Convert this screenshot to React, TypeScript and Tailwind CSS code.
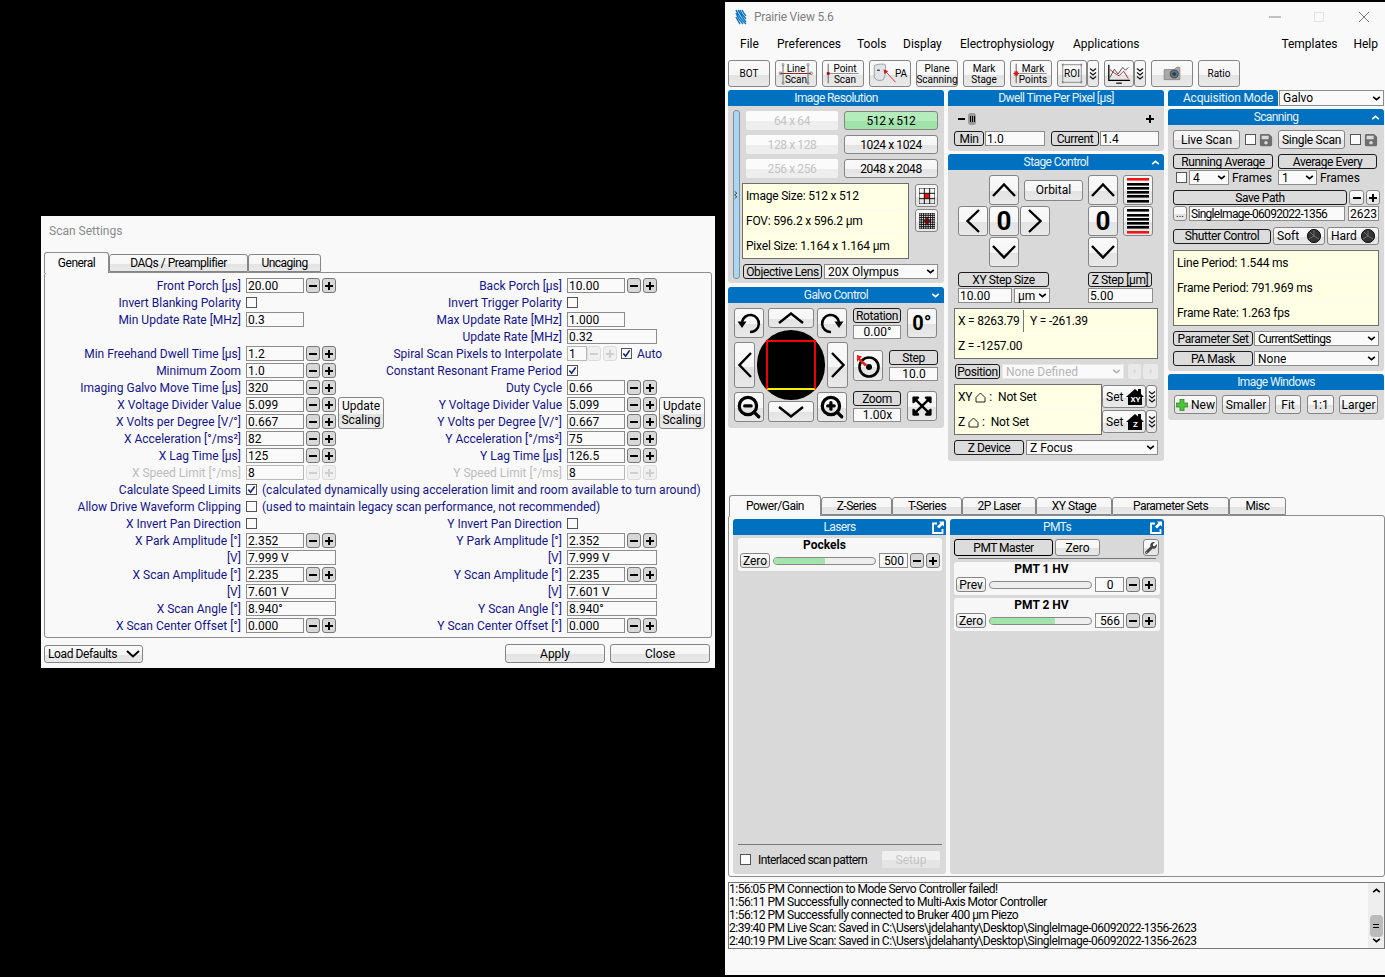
import type { ReactNode } from 'react';
import { FaExpandArrowsAlt, FaSave, FaWrench } from 'react-icons/fa';
import { ZoomIn, ZoomOut } from 'lucide-react';

const raised =
  'bg-[linear-gradient(#f9f9f9_0%,#f6f6f6_55%,#e3e3e3_55%,#e9e9e9_100%)] border border-[#858585] rounded-[3px]';
const navy = 'text-[#14148c]';

function Btn({ className = '', children }: { className?: string; children?: ReactNode }) {
  return <div className={`${raised} flex shrink-0 items-center justify-center whitespace-nowrap text-black ${className}`}>{children}</div>;
}

function Tag({ className = '', children }: { className?: string; children?: ReactNode }) {
  return (
    <div className={`flex shrink-0 items-center justify-center whitespace-nowrap rounded-[3px] border border-[#1c1c1c] bg-[#dcdcdc] tracking-[-0.4px] text-black ${className}`}>
      {children}
    </div>
  );
}

function Field({ className = '', children }: { className?: string; children?: ReactNode }) {
  return <div className={`flex shrink-0 items-center whitespace-nowrap border border-[#8c8c8c] bg-[#fafafa] pl-px text-black ${className}`}>{children}</div>;
}

function Caret({ className = '' }: { className?: string }) {
  return (
    <svg viewBox="0 0 10 6" className={`h-[5px] w-[9px] shrink-0 ${className}`}>
      <path d="M1 1l4 3.5L9 1" fill="none" stroke="currentColor" strokeWidth="2" />
    </svg>
  );
}

function Select({ className = '', muted = false, children }: { className?: string; muted?: boolean; children?: ReactNode }) {
  return (
    <div className={`flex shrink-0 items-center justify-between border bg-[#fafafa] pl-[3px] pr-[2px] ${muted ? 'border-[#e8e8e8] bg-[#eeeeee] text-[#b5b5b5]' : 'border-[#8c8c8c] text-black'} ${className}`}>
      <span className="truncate">{children}</span>
      <Caret />
    </div>
  );
}

function Step({ kind, off = false }: { kind: 'minus' | 'plus'; off?: boolean }) {
  return (
    <div className={`flex h-[15px] w-[14px] items-center justify-center rounded-[3px] border ${off ? 'border-[#dddddd] bg-[#f0f0f0] text-[#cfcfcf]' : 'border-[#777777] bg-[#d8d8d8] text-black'}`}>
      <svg viewBox="0 0 8 8" className="h-[8px] w-[8px]">
        <rect x="0" y="3" width="8" height="2" fill="currentColor" />
        {kind === 'plus' && <rect x="3" y="0" width="2" height="8" fill="currentColor" />}
      </svg>
    </div>
  );
}

function Stepper({ off = false, className = '' }: { off?: boolean; className?: string }) {
  return (
    <div className={`flex gap-[2px] ${className}`}>
      <Step kind="minus" off={off} />
      <Step kind="plus" off={off} />
    </div>
  );
}

function Check({ on = false, className = '' }: { on?: boolean; className?: string }) {
  return (
    <div className={`flex h-[11px] w-[11px] shrink-0 items-center justify-center border border-[#555555] bg-[#fafafa] ${className}`}>
      {on && (
        <svg viewBox="0 0 10 10" className="h-[9px] w-[9px]">
          <path d="M1.5 5l2.5 3L8.5 1.5" fill="none" stroke="#12207a" strokeWidth="1.8" />
        </svg>
      )}
    </div>
  );
}

function Chevron({ dir, w, h, stroke = 2.4 }: { dir: 'up' | 'down' | 'left' | 'right'; w: number; h: number; stroke?: number }) {
  const paths = {
    up: `M1 ${h - 1}L${w / 2} 1.5L${w - 1} ${h - 1}`,
    down: `M1 1L${w / 2} ${h - 1.5}L${w - 1} 1`,
    left: `M${w - 1} 1L1.5 ${h / 2}L${w - 1} ${h - 1}`,
    right: `M1 1L${w - 1.5} ${h / 2}L1 ${h - 1}`,
  };
  return (
    <svg width={w} height={h} viewBox={`0 0 ${w} ${h}`}>
      <path d={paths[dir]} fill="none" stroke="#000" strokeWidth={stroke} />
    </svg>
  );
}

function DoubleCaret() {
  return (
    <svg viewBox="0 0 8 14" className="h-[14px] w-[8px]">
      <path d="M1 1.5l3 2.5 3-2.5M1 5.5l3 2.5 3-2.5M1 9.5l3 2.5 3-2.5" fill="none" stroke="#111" strokeWidth="1.2" />
    </svg>
  );
}

function Panel({ title, corner, popout = false, className = '', bodyClass = '', children }: { title: string; corner?: 'up' | 'down'; popout?: boolean; className?: string; bodyClass?: string; children?: ReactNode }) {
  return (
    <div className={className}>
      <div className="relative h-[16px] rounded-t-[3px] bg-[#0070c0] text-center leading-[16px] tracking-[-0.6px] text-[#e8f3fb]">
        {title}
        {corner && (
          <svg viewBox="0 0 10 6" className="absolute right-[4px] top-[6px] h-[5px] w-[9px]">
            <path d={corner === 'up' ? 'M1 5l4-3.5L9 5' : 'M1 1l4 3.5L9 1'} fill="none" stroke="#fff" strokeWidth="2" />
          </svg>
        )}
        {popout && (
          <svg viewBox="0 0 12 13" className="absolute right-[2px] top-[2px] h-[13px] w-[12px]">
            <path d="M5 2.5H1v9.5h9.5V8" fill="none" stroke="#fff" strokeWidth="1.8" />
            <path d="M7 0.5h5v5l-1.6-1.5L7 7.5 5 5.5 8.5 2z" fill="#fff" />
          </svg>
        )}
      </div>
      <div className={`rounded-b-[3px] bg-[#d9d9d9] ${bodyClass}`}>{children}</div>
    </div>
  );
}

function Notes({ className = '', lines }: { className?: string; lines: ReactNode[] }) {
  return (
    <div className={`flex shrink-0 flex-col divide-y divide-[#fbfbf4] whitespace-nowrap border border-[#6f6f6f] bg-[#ffffe3] tracking-[-0.2px] text-black ${className}`}>
      {lines.map((line, i) => (
        <div key={i} className="flex flex-1 items-center pl-[3px]">
          {line}
        </div>
      ))}
    </div>
  );
}

function GridIcon({ cells, red }: { cells: number; red: number[] }) {
  const size = 18 / cells;
  const lines = Array.from({ length: cells + 1 }, (_, i) => i * size);
  return (
    <svg viewBox="0 0 18 18" className="h-[16px] w-[16px]">
      {red.map((c) => (
        <rect key={c} x={(c % cells) * size} y={Math.floor(c / cells) * size} width={size} height={size} fill="#f00a0a" />
      ))}
      {lines.map((p) => (
        <g key={p}>
          <path d={`M${p} 0V18`} stroke="#111" strokeWidth="1.1" />
          <path d={`M0 ${p}H18`} stroke="#111" strokeWidth="1.1" />
        </g>
      ))}
    </svg>
  );
}

function Rotate({ flip = false }: { flip?: boolean }) {
  return (
    <svg viewBox="0 0 24 24" className={`h-[24px] w-[24px] ${flip ? '-scale-x-100' : ''}`}>
      <path d="M13 21a8.5 8.5 0 1 0-8-10" fill="none" stroke="#000" strokeWidth="2.6" />
      <path d="M0.5 10.5l4.5 6.5 4.5-6.5z" fill="#000" />
    </svg>
  );
}

function Bars({ red }: { red: 'top' | 'bottom' }) {
  const ys = [2, 7, 11, 15, 19, 24];
  return (
    <svg viewBox="0 0 22 26" className="h-[26px] w-[22px]">
      {ys.map((y, i) => (
        <rect key={y} x="0" y={y - 1} width="22" height="2.6" fill={(red === 'top' && i === 0) || (red === 'bottom' && i === 5) ? '#f01414' : '#000'} />
      ))}
    </svg>
  );
}

function Shutter() {
  return (
    <svg viewBox="0 0 14 14" className="h-[14px] w-[14px]">
      <circle cx="7" cy="7" r="6.6" fill="#333" stroke="#111" />
      <path d="M7 1L7 7L2 10M7 7L12 10M3 3L7 7" stroke="#888" strokeWidth="0.7" fill="none" />
    </svg>
  );
}

function HomeOutline() {
  return (
    <svg viewBox="0 0 11 11" className="mx-[3px] h-[11px] w-[11px]">
      <path d="M1 5.5L5.5 1 10 5.5V10H1z" fill="none" stroke="#222" strokeWidth="1" />
    </svg>
  );
}

type Cell =
  | { kind: 'step'; label: string; value: string; off?: boolean; extra?: 'auto' }
  | { kind: 'plain'; label: string; value: string }
  | { kind: 'wide'; label: string; value: string }
  | { kind: 'check'; label: string; on?: boolean }
  | { kind: 'none' };

const settingRows: { left: Cell; right?: Cell; note?: string; on?: boolean; label?: string }[] = [
  { left: { kind: 'step', label: 'Front Porch [µs]', value: '20.00' }, right: { kind: 'step', label: 'Back Porch [µs]', value: '10.00' } },
  { left: { kind: 'check', label: 'Invert Blanking Polarity' }, right: { kind: 'check', label: 'Invert Trigger Polarity' } },
  { left: { kind: 'plain', label: 'Min Update Rate [MHz]', value: '0.3' }, right: { kind: 'plain', label: 'Max Update Rate [MHz]', value: '1.000' } },
  { left: { kind: 'none' }, right: { kind: 'wide', label: 'Update Rate [MHz]', value: '0.32' } },
  { left: { kind: 'step', label: 'Min Freehand Dwell Time [µs]', value: '1.2' }, right: { kind: 'step', label: 'Spiral Scan Pixels to Interpolate', value: '1', off: true, extra: 'auto' } },
  { left: { kind: 'step', label: 'Minimum Zoom', value: '1.0' }, right: { kind: 'check', label: 'Constant Resonant Frame Period', on: true } },
  { left: { kind: 'step', label: 'Imaging Galvo Move Time [µs]', value: '320' }, right: { kind: 'step', label: 'Duty Cycle', value: '0.66' } },
  { left: { kind: 'step', label: 'X Voltage Divider Value', value: '5.099' }, right: { kind: 'step', label: 'Y Voltage Divider Value', value: '5.099' } },
  { left: { kind: 'step', label: 'X Volts per Degree [V/°]', value: '0.667' }, right: { kind: 'step', label: 'Y Volts per Degree [V/°]', value: '0.667' } },
  { left: { kind: 'step', label: 'X Acceleration [°/ms²]', value: '82' }, right: { kind: 'step', label: 'Y Acceleration [°/ms²]', value: '75' } },
  { left: { kind: 'step', label: 'X Lag Time [µs]', value: '125' }, right: { kind: 'step', label: 'Y Lag Time [µs]', value: '126.5' } },
  { left: { kind: 'step', label: 'X Speed Limit [°/ms]', value: '8', off: true }, right: { kind: 'step', label: 'Y Speed Limit [°/ms]', value: '8', off: true } },
  { left: { kind: 'none' }, label: 'Calculate Speed Limits', on: true, note: '(calculated dynamically using acceleration limit and room available to turn around)' },
  { left: { kind: 'none' }, label: 'Allow Drive Waveform Clipping', note: '(used to maintain legacy scan performance, not recommended)' },
  { left: { kind: 'check', label: 'X Invert Pan Direction' }, right: { kind: 'check', label: 'Y Invert Pan Direction' } },
  { left: { kind: 'step', label: 'X Park Amplitude [°]', value: '2.352' }, right: { kind: 'step', label: 'Y Park Amplitude [°]', value: '2.352' } },
  { left: { kind: 'wide', label: '[V]', value: '7.999 V' }, right: { kind: 'wide', label: '[V]', value: '7.999 V' } },
  { left: { kind: 'step', label: 'X Scan Amplitude [°]', value: '2.235' }, right: { kind: 'step', label: 'Y Scan Amplitude [°]', value: '2.235' } },
  { left: { kind: 'wide', label: '[V]', value: '7.601 V' }, right: { kind: 'wide', label: '[V]', value: '7.601 V' } },
  { left: { kind: 'wide', label: 'X Scan Angle [°]', value: '8.940°' }, right: { kind: 'wide', label: 'Y Scan Angle [°]', value: '8.940°' } },
  { left: { kind: 'step', label: 'X Scan Center Offset [°]', value: '0.000' }, right: { kind: 'step', label: 'Y Scan Center Offset [°]', value: '0.000' } },
];

function SettingLabel({ text, off = false }: { text?: string; off?: boolean }) {
  return <div className={`h-[17px] whitespace-nowrap pr-[5px] text-right leading-[18px] ${off ? 'text-[#bcbcbc]' : navy}`}>{text}</div>;
}

function SettingControl({ cell }: { cell: Cell }) {
  if (cell.kind === 'none') return <div />;
  if (cell.kind === 'check') {
    return (
      <div className="flex h-[17px] items-center">
        <Check on={cell.on} />
      </div>
    );
  }
  const off = cell.kind === 'step' && cell.off;
  const auto = cell.kind === 'step' && cell.extra === 'auto';
  return (
    <div className="flex h-[17px] items-center whitespace-nowrap">
      <Field className={`h-[15px] ${cell.kind === 'wide' ? 'w-[90px]' : auto ? 'w-[20px]' : 'w-[58px]'} ${off ? 'border-[#b8b8b8] text-[#a0a0a0]' : ''}`}>{cell.value}</Field>
      {cell.kind === 'step' && <Stepper off={off} className={auto ? '' : 'ml-[2px]'} />}
      {auto && (
        <>
          <Check on className="ml-[4px]" />
          <span className={`ml-[5px] ${navy}`}>Auto</span>
        </>
      )}
    </div>
  );
}

function UpdateScaling() {
  return (
    <Btn className="row-span-2 h-[32px] w-[46px] flex-col self-center leading-[14px]">
      <span>Update</span>
      <span>Scaling</span>
    </Btn>
  );
}

function ScanSettings() {
  return (
    <div className="absolute left-[41px] top-[216px] flex h-[452px] w-[674px] flex-col bg-[#f9f9f9]">
      <div className="ml-[8px] mt-[8px] h-[14px] leading-[14px] text-[#8a8a8a]">Scan Settings</div>
      <div className="ml-[3px] mt-[12px] flex h-[22px] items-end tracking-[-0.5px]">
        <div className="relative z-10 -mb-px flex h-[21px] w-[65px] items-center justify-center rounded-t-[3px] border border-b-0 border-[#8c8c8c] bg-[#f9f9f9]">General</div>
        <div className={`${raised} flex h-[18px] w-[139px] items-center justify-center rounded-b-none`}>DAQs / Preamplifier</div>
        <div className={`${raised} flex h-[18px] w-[73px] items-center justify-center rounded-b-none`}>Uncaging</div>
      </div>
      <div className="mx-[3px] h-[366px] rounded-[3px] border border-[#8c8c8c] pt-[4px]">
        <div className="grid auto-rows-[17px] grid-cols-[201px_92px_46px_183px_92px_46px]">
          {settingRows.map((row, i) => {
            if (row.note) {
              return [
                <SettingLabel key={`${i}a`} text={row.label} />,
                <div key={`${i}b`} className={`col-span-5 flex h-[17px] items-center whitespace-nowrap ${navy}`}>
                  <Check on={row.on} />
                  <span className="ml-[5px]">{row.note}</span>
                </div>,
              ];
            }
            const left = row.left;
            const right = row.right as Cell;
            const leftLabel = left.kind === 'none' ? undefined : left.label;
            const rightLabel = right.kind === 'none' ? undefined : right.label;
            const leftOff = left.kind === 'step' && left.off;
            const rightOff = right.kind === 'step' && right.off && !right.extra;
            const hasUpdate = i === 7;
            const spansUpdate = i === 7 || i === 8;
            return [
              <SettingLabel key={`${i}a`} text={leftLabel} off={leftOff} />,
              <SettingControl key={`${i}b`} cell={left} />,
              hasUpdate ? <UpdateScaling key={`${i}c`} /> : spansUpdate ? null : <div key={`${i}c`} />,
              <SettingLabel key={`${i}d`} text={rightLabel} off={rightOff} />,
              <div key={`${i}e`} className={right.kind === 'step' && right.extra ? 'col-span-2' : ''}>
                <SettingControl cell={right} />
              </div>,
              hasUpdate ? <UpdateScaling key={`${i}f`} /> : spansUpdate || (right.kind === 'step' && right.extra) ? null : <div key={`${i}f`} />,
            ];
          })}
        </div>
      </div>
      <div className="mx-[3px] mt-[6px] flex items-center">
        <div className={`${raised} flex h-[18px] w-[99px] items-center justify-between pl-[3px] pr-[2px] tracking-[-0.4px]`}>
          Load Defaults
          <svg viewBox="0 0 14 8" className="h-[8px] w-[14px]">
            <path d="M1 1l6 5.5L13 1" fill="none" stroke="#000" strokeWidth="2" />
          </svg>
        </div>
        <Btn className="ml-auto h-[19px] w-[100px]">Apply</Btn>
        <Btn className="ml-[5px] mr-[2px] h-[19px] w-[100px]">Close</Btn>
      </div>
    </div>
  );
}

function Logo() {
  return (
    <svg viewBox="0 0 12 16" className="h-[16px] w-[12px]">
      <path d="M1 1c2 4 4 9 10 14M3 1c2 3 4 8 8 12M5 1c1 3 3 6 6 9M7 1c1 2 2 4 4 6M1 4c1 3 3 7 7 11M1 8c1 2 2 4 4 7" fill="none" stroke="#0f78c4" strokeWidth="1.4" />
    </svg>
  );
}

function ToolBtn({ className = 'w-[42px]', children }: { className?: string; children?: ReactNode }) {
  return <Btn className={`relative h-[27px] flex-col text-[10px] leading-[11px] ${className}`}>{children}</Btn>;
}

function Toolbar() {
  return (
    <div className="ml-[3px] mt-[4px] flex h-[27px] items-center text-[10px]">
      <ToolBtn>BOT</ToolBtn>
      <ToolBtn className="ml-[5px] w-[42px]">
        <svg viewBox="0 0 42 27" className="absolute inset-0 h-full w-full">
          <path d="M4 13.5H37" stroke="#8a1010" strokeWidth="1" />
          <path d="M7 5V23M34 5V23" stroke="#666" strokeWidth="1" />
          <path d="M3 12h2.5v2.5H3zM36 12h2.5v2.5H36zM6 3h2v2H6zM33 3h2v2h-2zM6 23h2v2H6zM33 23h2v2h-2z" fill="none" stroke="#555" strokeWidth="0.6" />
        </svg>
        <span className="relative">Line</span>
        <span className="relative">Scan</span>
      </ToolBtn>
      <ToolBtn className="ml-[5px] w-[42px]">
        <svg viewBox="0 0 42 27" className="absolute inset-0 h-full w-full">
          <path d="M5 13.5H38" stroke="#888" strokeWidth="1" />
          <path d="M5 3V24" stroke="#555" strokeWidth="1" />
          <rect x="3.5" y="12" width="3" height="3" fill="#a01010" />
        </svg>
        <span className="relative pl-[4px]">Point</span>
        <span className="relative pl-[4px]">Scan</span>
      </ToolBtn>
      <ToolBtn className="ml-[5px] w-[42px]">
        <svg viewBox="0 0 42 27" className="absolute inset-0 h-full w-full">
          <path d="M4 5c3-2 11-2 12-1 1 5 0 12-2 16-4 2-9 1-10-3z" fill="#dfe5e8" stroke="#888" strokeWidth="0.8" />
          <path d="M7 10h3" stroke="#333" strokeWidth="1.4" />
          <path d="M15 10l12 13" stroke="#e01010" strokeWidth="0.9" />
          <path d="M14 9l1 5 4-3z" fill="#e01010" />
        </svg>
        <span className="relative pl-[22px]">PA</span>
      </ToolBtn>
      <ToolBtn className="ml-[5px] w-[42px]">
        <span>Plane</span>
        <span>Scanning</span>
      </ToolBtn>
      <ToolBtn className="ml-[5px] w-[42px]">
        <span>Mark</span>
        <span>Stage</span>
      </ToolBtn>
      <ToolBtn className="ml-[5px] w-[42px]">
        <svg viewBox="0 0 42 27" className="absolute inset-0 h-full w-full">
          <path d="M5 13.5H38" stroke="#888" strokeWidth="1" />
          <path d="M5 3V24" stroke="#555" strokeWidth="1" />
          <path d="M2 13.5h6M5 10.5v6M3 11.5l4 4M7 11.5l-4 4" stroke="#e01010" strokeWidth="1.1" />
        </svg>
        <span className="relative pl-[4px]">Mark</span>
        <span className="relative pl-[4px]">Points</span>
      </ToolBtn>
      <ToolBtn className="ml-[5px] w-[30px]">
        <svg viewBox="0 0 30 27" className="absolute inset-0 h-full w-full">
          <rect x="5" y="4" width="20" height="19" fill="none" stroke="#888" strokeWidth="1" />
          <path d="M4 3h2v2H4zM24 3h2v2h-2zM4 22h2v2H4zM24 22h2v2h-2z" fill="#888" />
        </svg>
        <span className="relative">ROI</span>
      </ToolBtn>
      <Btn className="h-[27px] w-[12px]">
        <DoubleCaret />
      </Btn>
      <ToolBtn className="ml-[5px] w-[30px]">
        <svg viewBox="0 0 30 27" className="absolute inset-0 h-full w-full">
          <path d="M4 4V21H27" fill="none" stroke="#000" strokeWidth="1.4" />
          <path d="M5 18l5-9 4 5 5-7 3 3 3-3" fill="none" stroke="#333" strokeWidth="0.9" />
          <path d="M5 9l5 4 5 3 5-5 5 8" fill="none" stroke="#b01010" strokeWidth="0.9" />
          <path d="M12 24h6" stroke="#333" strokeWidth="1.6" />
        </svg>
      </ToolBtn>
      <Btn className="h-[27px] w-[12px]">
        <DoubleCaret />
      </Btn>
      <ToolBtn className="ml-[5px] w-[42px]">
        <svg viewBox="0 0 16 14" className="h-[16px] w-[18px]">
          <path d="M1 3h9l2-2h3v11H1z" fill="#a8a8a8" stroke="#777" strokeWidth="0.6" />
          <circle cx="10" cy="7" r="3.6" fill="#5a6f80" stroke="#333" strokeWidth="0.6" />
          <circle cx="10" cy="7" r="1.6" fill="#2c3a44" />
        </svg>
      </ToolBtn>
      <ToolBtn className="ml-[5px] w-[42px]">Ratio</ToolBtn>
    </div>
  );
}

function ImageResolution() {
  const sizes = [
    ['64 x 64', '512 x 512'],
    ['128 x 128', '1024 x 1024'],
    ['256 x 256', '2048 x 2048'],
  ];
  return (
    <Panel title="Image Resolution" bodyClass="flex h-[177px]">
      <div className="ml-[5px] mt-[4px] flex h-[169px] w-[7px] items-center rounded-[3px] border border-[#8c8c8c] bg-[#a8d6f5]">
        <svg viewBox="0 0 7 12" className="h-[12px] w-[5px]">
          <path d="M1 1l3 2.5L1 6M1 6l3 2.5L1 11" fill="none" stroke="#111" strokeWidth="1" />
        </svg>
      </div>
      <div className="ml-[2px] flex flex-col pt-[5px]">
        <div className="ml-[4px] grid grid-cols-[92px_94px] gap-x-[6px] gap-y-[5px] tracking-[-0.4px]">
          {sizes.map(([off, on], i) => (
            <div key={off} className="contents">
              <div className="flex h-[19px] items-center justify-center rounded-[2px] bg-[linear-gradient(#fbfbfb_55%,#eeeeee_55%)] text-[#c4c4c4]">{off}</div>
              <Btn className={`h-[19px] ${i === 0 ? '!bg-[linear-gradient(#b4ecbc_55%,#9fe2aa_55%)]' : ''}`}>{on}</Btn>
            </div>
          ))}
        </div>
        <div className="mt-[5px] flex">
          <Notes
            className="h-[76px] w-[167px]"
            lines={['Image Size: 512 x 512', 'FOV: 596.2 x 596.2 µm', 'Pixel Size: 1.164 x 1.164 µm']}
          />
          <div className="ml-[6px] flex flex-col gap-[2px] pt-px">
            <Btn className="h-[23px] w-[23px]">
              <GridIcon cells={3} red={[4]} />
            </Btn>
            <Btn className="h-[23px] w-[23px]">
              <GridIcon cells={7} red={[17, 23, 24, 25, 31]} />
            </Btn>
          </div>
        </div>
        <div className="mt-[5px] flex h-[15px] pl-px">
          <Tag className="w-[79px]">Objective Lens</Tag>
          <Select className="ml-[2px] w-[114px]">20X Olympus</Select>
        </div>
      </div>
    </Panel>
  );
}

function GalvoControl() {
  return (
    <Panel title="Galvo Control" corner="down" className="mt-[4px]" bodyClass="flex h-[125px] pl-[6px] pt-[5px]">
      <div className="grid h-[114px] w-[114px] grid-cols-[21px_2px_7px_4px_46px_3px_8px_2px_21px] grid-rows-[20px_2px_8px_4px_46px_4px_8px_1px_21px]">
        <Btn className="col-[1/4] row-[1/4]"><Rotate /></Btn>
        <Btn className="col-[5/6] row-[1/2]"><Chevron dir="up" w={26} h={12} /></Btn>
        <Btn className="col-[7/10] row-[1/4] w-[30px]"><Rotate flip /></Btn>
        <Btn className="col-[1/2] row-[5/6]"><Chevron dir="left" w={14} h={26} /></Btn>
        <div className="relative col-[3/8] row-[3/8] m-auto flex h-[70px] w-[68px] items-center justify-center rounded-full bg-black">
          <div className="h-[50px] w-[50px] border-2 border-[#f00000] border-b-[#f5f000]" />
        </div>
        <Btn className="col-[9/10] row-[5/6]"><Chevron dir="right" w={14} h={26} /></Btn>
        <Btn className="col-[1/4] row-[7/10]"><ZoomOut size={26} strokeWidth={3} color="#000" /></Btn>
        <Btn className="col-[5/6] row-[9/10]"><Chevron dir="down" w={26} h={12} /></Btn>
        <Btn className="col-[7/10] row-[7/10] w-[30px]"><ZoomIn size={26} strokeWidth={3} color="#000" /></Btn>
      </div>
      <div className="ml-[5px] flex w-[85px] flex-col">
        <div className="flex h-[31px]">
          <div className="flex w-[48px] flex-col gap-[2px]">
            <Tag className="h-[15px]">Rotation</Tag>
            <Field className="h-[14px] justify-center text-[#333]">0.00°</Field>
          </div>
          <Btn className="ml-[6px] h-[30px] w-[30px] text-[20px] font-bold">0°</Btn>
        </div>
        <div className="mt-[11px] flex h-[31px]">
          <Btn className="h-[31px] w-[30px]">
            <svg viewBox="0 0 24 24" className="h-[24px] w-[24px]">
              <circle cx="13" cy="13" r="9.5" fill="none" stroke="#000" strokeWidth="2.6" />
              <circle cx="13" cy="13" r="3" fill="#000" />
              <path d="M1 1l5 1.5L4 4.5l7 6-2 2-6.5-6.5L1 8z" fill="#f01818" />
            </svg>
          </Btn>
          <div className="ml-[6px] flex w-[49px] flex-col gap-[2px]">
            <Tag className="h-[15px]">Step</Tag>
            <Field className="h-[14px] justify-center">10.0</Field>
          </div>
        </div>
        <div className="mt-[10px] flex h-[31px]">
          <div className="flex w-[48px] flex-col gap-[2px]">
            <Tag className="h-[15px]">Zoom</Tag>
            <Field className="h-[14px] justify-center text-[#14146c]">1.00x</Field>
          </div>
          <Btn className="ml-[6px] h-[30px] w-[30px]"><FaExpandArrowsAlt size={22} color="#000" /></Btn>
        </div>
      </div>
    </Panel>
  );
}

function Dwell() {
  return (
    <Panel title="Dwell Time Per Pixel [µs]" bodyClass="h-[45px] px-[6px]">
      <div className="flex h-[25px] items-center">
        <span className="ml-[4px] h-[2px] w-[7px] bg-black" />
        <span className="ml-[3px] flex h-[12px] w-[8px] items-center justify-center gap-px rounded-[3px] bg-[#999999]">
          <i className="h-[6px] w-px bg-black" />
          <i className="h-[6px] w-px bg-black" />
          <i className="h-[6px] w-px bg-black" />
        </span>
        <svg viewBox="0 0 8 8" className="ml-auto mr-[4px] h-[8px] w-[8px]">
          <path d="M0 3h8v2H0zM3 0h2v8H3z" fill="#000" />
        </svg>
      </div>
      <div className="flex h-[15px]">
        <Tag className="w-[30px]">Min</Tag>
        <Field className="ml-px w-[60px]">1.0</Field>
        <Tag className="ml-[6px] w-[48px]">Current</Tag>
        <Field className="ml-px w-[59px]">1.4</Field>
      </div>
    </Panel>
  );
}

function HomeSet({ text }: { text: string }) {
  return (
    <div className="flex">
      <Btn className="h-[23px] w-[44px] !justify-start pl-[3px]">
        Set
        <span className="relative ml-[3px] flex h-[17px] w-[18px] justify-center">
          <svg viewBox="0 0 18 17" className="h-[17px] w-[18px]">
            <path d="M0 9L9 1l3 2.5V1h3v5l3 3h-2v8H2V9z" fill="#000" />
          </svg>
          <span className="absolute bottom-0 text-[8px] font-bold leading-[10px] text-white">{text}</span>
        </span>
      </Btn>
      <Btn className="h-[23px] w-[11px]"><DoubleCaret /></Btn>
    </div>
  );
}

function StageControl() {
  return (
    <Panel title="Stage Control" corner="up" className="mt-[3px]" bodyClass="h-[291px] px-[6px] pt-[5px]">
      <div className="ml-[4px] grid h-[92px] grid-cols-[30px_1px_30px_1px_4px_26px_33px_5px_30px_5px_30px] grid-rows-[30px_1px_30px_1px_30px]">
        <Btn className="col-[3/4] row-[1/2]"><Chevron dir="up" w={24} h={14} /></Btn>
        <Btn className="col-[6/8] row-[1/2] h-[21px] self-center">Orbital</Btn>
        <Btn className="col-[9/10] row-[1/2]"><Chevron dir="up" w={24} h={14} /></Btn>
        <Btn className="col-[11/12] row-[1/2]"><Bars red="top" /></Btn>
        <Btn className="col-[1/2] row-[3/4]"><Chevron dir="left" w={14} h={24} /></Btn>
        <Btn className="col-[3/4] row-[3/4] text-[26px] font-bold">0</Btn>
        <Btn className="col-[5/7] row-[3/4]"><Chevron dir="right" w={14} h={24} /></Btn>
        <Btn className="col-[9/10] row-[3/4] text-[26px] font-bold">0</Btn>
        <Btn className="col-[11/12] row-[3/4]"><Bars red="bottom" /></Btn>
        <Btn className="col-[3/4] row-[5/6]"><Chevron dir="down" w={24} h={14} /></Btn>
        <Btn className="col-[9/10] row-[5/6]"><Chevron dir="down" w={24} h={14} /></Btn>
      </div>
      <div className="ml-[4px] mt-[5px] flex h-[15px]">
        <Tag className="w-[91px]">XY Step Size</Tag>
        <Tag className="ml-[39px] w-[64px]">Z Step [µm]</Tag>
      </div>
      <div className="ml-[4px] mt-px flex h-[15px]">
        <Field className="w-[54px]">10.00</Field>
        <Select className="ml-[2px] w-[36px]">µm</Select>
        <Field className="ml-[38px] w-[65px]">5.00</Field>
      </div>
      <Notes
        className="mt-[5px] h-[51px] w-[204px]"
        lines={[
          <span key="xy" className="flex h-full w-full items-center">
            <span className="w-[66px] border-r border-[#777777] leading-[22px]">X = 8263.79</span>
            <span className="ml-[6px]">Y = -261.39</span>
          </span>,
          'Z = -1257.00',
        ]}
      />
      <div className="mt-[5px] flex h-[15px]">
        <Tag className="ml-px w-[45px]">Position</Tag>
        <Select muted className="ml-[2px] w-[122px]">None Defined</Select>
        <div className="ml-[4px] flex h-[15px] w-[13px] items-center justify-center rounded-[2px] bg-[#e9e9e9] text-[9px] text-[#c4c4c4]">‹</div>
        <div className="ml-[2px] flex h-[15px] w-[15px] items-center justify-center rounded-[2px] bg-[#e9e9e9] text-[9px] text-[#c4c4c4]">›</div>
      </div>
      <div className="mt-[5px] flex">
        <Notes
          className="h-[51px] w-[148px]"
          lines={[
            <span key="xy" className="flex items-center">XY<HomeOutline />:<span className="ml-[6px]">Not Set</span></span>,
            <span key="z" className="flex items-center">Z<HomeOutline />:<span className="ml-[6px]">Not Set</span></span>,
          ]}
        />
        <div className="mt-px flex flex-col gap-[2px]">
          <HomeSet text="XY" />
          <HomeSet text="Z" />
        </div>
      </div>
      <div className="mt-[5px] flex h-[15px]">
        <Tag className="w-[70px]">Z Device</Tag>
        <Select className="ml-[2px] w-[132px]">Z Focus</Select>
      </div>
    </Panel>
  );
}

function Scanning() {
  return (
    <Panel title="Scanning" corner="up" className="mt-[3px]" bodyClass="h-[246px] px-[5px] pt-[5px]">
      <div className="flex h-[19px] items-center">
        <Btn className="h-[19px] w-[67px]">Live Scan</Btn>
        <Check className="ml-[5px]" />
        <FaSave size={14} color="#6e6e6e" className="ml-[3px]" />
        <Btn className="ml-[5px] h-[19px] w-[67px] tracking-[-0.3px]">Single Scan</Btn>
        <Check className="ml-[5px]" />
        <FaSave size={14} color="#6e6e6e" className="ml-[3px]" />
      </div>
      <div className="mt-[5px] flex h-[15px]">
        <Tag className="w-[100px]">Running Average</Tag>
        <Tag className="ml-[5px] w-[99px]">Average Every</Tag>
      </div>
      <div className="mt-px flex h-[15px] items-center">
        <Check className="ml-[3px]" />
        <Select className="ml-[2px] h-[15px] w-[40px]">4</Select>
        <span className="ml-[3px] w-[45px]">Frames</span>
        <Select className="ml-[1px] h-[15px] w-[39px]">1</Select>
        <span className="ml-[3px]">Frames</span>
      </div>
      <div className="mt-[5px] flex h-[15px] items-center">
        <Tag className="h-[15px] w-[174px]">Save Path</Tag>
        <Btn className="ml-[2px] h-[15px] w-[15px] !bg-[#d8d8d8]"><svg viewBox="0 0 8 8" className="h-[8px] w-[8px]"><path d="M0 3h8v2H0z" /></svg></Btn>
        <Btn className="ml-[2px] h-[15px] w-[14px] !bg-[#d8d8d8]"><svg viewBox="0 0 8 8" className="h-[8px] w-[8px]"><path d="M0 3h8v2H0zM3 0h2v8H3z" /></svg></Btn>
      </div>
      <div className="mt-px flex h-[15px]">
        <Btn className="w-[14px] text-[10px]">...</Btn>
        <Field className="ml-[2px] w-[156px] tracking-[-0.7px]">SingleImage-06092022-1356</Field>
        <Field className="ml-[3px] w-[31px] justify-end pr-px">2623</Field>
      </div>
      <div className="mt-[6px] flex h-[18px] items-center">
        <Tag className="h-[15px] w-[98px]">Shutter Control</Tag>
        <Btn className="ml-[2px] h-[18px] w-[52px] !justify-between px-[3px]">Soft<Shutter /></Btn>
        <Btn className="ml-[2px] h-[18px] w-[52px] !justify-between px-[3px]">Hard<Shutter /></Btn>
      </div>
      <Notes
        className="mt-[5px] h-[76px] w-[206px]"
        lines={['Line Period: 1.544 ms', 'Frame Period: 791.969 ms', 'Frame Rate: 1.263 fps']}
      />
      <div className="mt-[5px] flex h-[15px]">
        <Tag className="w-[80px]">Parameter Set</Tag>
        <Select className="ml-px w-[125px] tracking-[-0.7px]">CurrentSettings</Select>
      </div>
      <div className="mt-[5px] flex h-[15px]">
        <Tag className="w-[80px]">PA Mask</Tag>
        <Select className="ml-px w-[125px]">None</Select>
      </div>
    </Panel>
  );
}

function ImageWindows() {
  return (
    <Panel title="Image Windows" className="mt-[3px]" bodyClass="flex h-[30px] pl-[6px] pt-[5px]">
      <Btn className="h-[19px] w-[43px]">
        <svg viewBox="0 0 12 12" className="mr-[3px] h-[12px] w-[12px]">
          <path d="M4 0h4v4h4v4H8v4H4V8H0V4h4z" fill="#4ec23a" stroke="#2a7a20" strokeWidth="0.7" />
        </svg>
        New
      </Btn>
      <Btn className="ml-[5px] h-[19px] w-[48px]">Smaller</Btn>
      <Btn className="ml-[5px] h-[19px] w-[26px]">Fit</Btn>
      <Btn className="ml-[6px] h-[19px] w-[27px]">1:1</Btn>
      <Btn className="ml-[5px] h-[19px] w-[39px]">Larger</Btn>
    </Panel>
  );
}

function Slider({ fill }: { fill: number }) {
  return (
    <div className="ml-[3px] h-[8px] w-[103px] overflow-hidden rounded-[4px] border border-[#888888] bg-[#eeeeee]">
      <div className="h-full bg-[#a3e4ab]" style={{ width: `${fill}%` }} />
    </div>
  );
}

function PowerRow({ title, btn, value, fill }: { title: string; btn: string; value: string; fill: number }) {
  return (
    <div className="h-[33px] rounded-[3px] bg-[#f7f7f7]">
      <div className="h-[14px] pr-[31px] text-center font-bold leading-[15px] text-black">{title}</div>
      <div className="flex h-[17px] items-center pl-[2px]">
        <Btn className="h-[15px] w-[30px]">{btn}</Btn>
        <Slider fill={fill} />
        <Field className="ml-[3px] h-[15px] w-[29px] justify-center pl-0">{value}</Field>
        <Stepper className="ml-[2px]" />
      </div>
    </div>
  );
}

function BottomTabs() {
  const tabs: [string, string][] = [
    ['Z-Series', 'w-[71px]'],
    ['T-Series', 'w-[70px]'],
    ['2P Laser', 'w-[74px]'],
    ['XY Stage', 'w-[76px]'],
    ['Parameter Sets', 'w-[117px]'],
    ['Misc', 'w-[57px]'],
  ];
  return (
    <>
      <div className="ml-[4px] mt-[1px] flex h-[20px] items-end tracking-[-0.5px]">
        <div className="relative z-10 -mb-px flex h-[21px] w-[92px] items-center justify-center rounded-t-[3px] border border-b-0 border-[#8c8c8c] bg-[#f9f9f9]">Power/Gain</div>
        {tabs.map(([t, w]) => (
          <div key={t} className={`${raised} flex h-[18px] items-center justify-center rounded-b-none ${w}`}>{t}</div>
        ))}
      </div>
      <div className="ml-[3px] flex h-[362px] gap-[4px] rounded-[3px] border border-[#8c8c8c] pl-[4px] pt-[3px]">
        <Panel title="Lasers" popout className="w-[213px]" bodyClass="flex h-[339px] flex-col pl-[5px] pr-[4px] pt-[3px]">
          <PowerRow title="Pockels" btn="Zero" value="500" fill={50} />
          <div className="mt-auto h-[30px] border-t border-[#777777]">
            <div className="flex h-[29px] items-center whitespace-nowrap">
              <Check className="ml-[2px]" />
              <span className="ml-[7px] w-[124px] tracking-[-0.6px]">Interlaced scan pattern</span>
              <div className="flex h-[17px] w-[58px] items-center justify-center rounded-[2px] bg-[linear-gradient(#f0f0f0_55%,#e5e5e5_55%)] text-[#c4c4c4]">Setup</div>
            </div>
          </div>
        </Panel>
        <Panel title="PMTs" popout className="w-[214px]" bodyClass="h-[339px] px-[4px] pt-[4px]">
          <div className="flex h-[17px]">
            <div className="flex h-[17px] w-[99px] items-center justify-center rounded-[3px] border border-black bg-[#dcdcdc] tracking-[-0.5px]">PMT Master</div>
            <Btn className="ml-[2px] h-[17px] w-[45px]">Zero</Btn>
            <Btn className="ml-auto mr-[1px] h-[17px] w-[16px]"><FaWrench size={12} color="#444" /></Btn>
          </div>
          <div className="mx-[4px] mt-[2px] h-px bg-[#777777]" />
          <div className="mt-[3px] flex flex-col gap-[3px]">
            <PowerRow title="PMT 1 HV" btn="Prev" value="0" fill={0} />
            <PowerRow title="PMT 2 HV" btn="Zero" value="566" fill={64} />
          </div>
        </Panel>
      </div>
    </>
  );
}

const logLines = [
  '1:56:05 PM Connection to Mode Servo Controller failed!',
  '1:56:11 PM Successfully connected to Multi-Axis Motor Controller',
  '1:56:12 PM Successfully connected to Bruker 400 µm Piezo',
  '2:39:40 PM Live Scan: Saved in C:\\Users\\jdelahanty\\Desktop\\SingleImage-06092022-1356-2623',
  '2:40:19 PM Live Scan: Saved in C:\\Users\\jdelahanty\\Desktop\\SingleImage-06092022-1356-2623',
];

function LogBox() {
  return (
    <div className="ml-[3px] mt-[5px] flex h-[67px] border border-[#777777] bg-[#f9f9f9]">
      <div className="flex-1 overflow-hidden whitespace-nowrap leading-[13px] tracking-[-0.5px] text-black">
        {logLines.map((line) => (
          <div key={line}>{line}</div>
        ))}
      </div>
      <div className="flex w-[16px] flex-col items-center justify-between bg-[#eeeeee] py-[5px]">
        <Caret className="rotate-180" />
        <div className="mt-[20px] flex h-[22px] w-[13px] flex-col items-center justify-center gap-[2px] rounded-[4px] bg-[#bbbbbb]">
          <i className="h-px w-[6px] bg-black" />
          <i className="h-px w-[6px] bg-black" />
        </div>
        <Caret />
      </div>
    </div>
  );
}

export default function App() {
  return (
    <div className="relative h-[977px] w-[1385px] overflow-hidden bg-black font-['Roboto','Liberation_Sans',sans-serif] text-[12px] text-black">
      <ScanSettings />
      <div className="absolute left-[725px] top-[2px] flex h-[973px] w-[660px] flex-col bg-[#f9f9f9]">
        <div className="flex h-[30px] items-center pl-[10px]">
          <Logo />
          <span className="ml-[7px] tracking-[-0.2px] text-[#808080]">Prairie View 5.6</span>
          <svg viewBox="0 0 102 12" className="ml-auto mr-[14px] h-[12px] w-[102px]">
            <path d="M0 6H12" stroke="#888" />
            <rect x="45.5" y="1.5" width="9" height="9" fill="none" stroke="#e5e5e5" />
            <path d="M90 1l10 10M100 1L90 11" stroke="#777" />
          </svg>
        </div>
        <div className="flex h-[24px] items-center pl-[15px] pr-[7px]">
          <span className="w-[37px]">File</span>
          <span className="w-[80px]">Preferences</span>
          <span className="w-[46px]">Tools</span>
          <span className="w-[57px]">Display</span>
          <span className="w-[113px]">Electrophysiology</span>
          <span>Applications</span>
          <span className="ml-auto w-[72px]">Templates</span>
          <span>Help</span>
        </div>
        <Toolbar />
        <div className="ml-[3px] mt-[3px] flex h-[404px] gap-[4px]">
          <div className="w-[216px]">
            <ImageResolution />
            <GalvoControl />
          </div>
          <div className="w-[216px]">
            <Dwell />
            <StageControl />
          </div>
          <div className="w-[216px]">
            <div className="flex h-[16px] leading-[18px]">
              <div className="flex w-[110px] items-center justify-center rounded-t-[3px] bg-[#0070c0] pl-[10px] tracking-[-0.2px] text-[#e8f3fb]">Acquisition Mode</div>
              <Select className="ml-px w-[105px]">Galvo</Select>
            </div>
            <Scanning />
            <ImageWindows />
          </div>
        </div>
        <BottomTabs />
        <LogBox />
      </div>
    </div>
  );
}
